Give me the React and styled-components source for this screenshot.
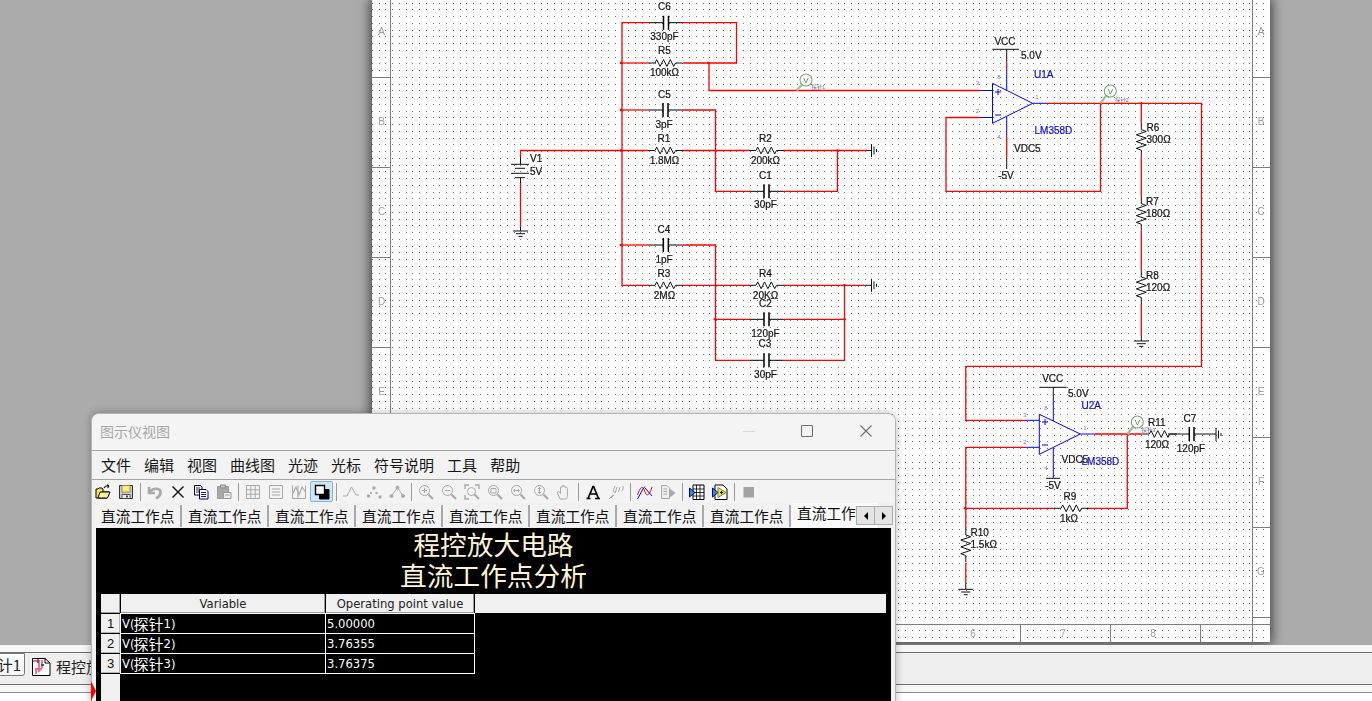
import React from 'react';
import styled, { createGlobalStyle } from 'styled-components';

const GlobalStyle = createGlobalStyle`
  html, body {
    margin: 0;
    padding: 0;
    background: #ababab;
    overflow: hidden;
  }
`;

const UI_FONT = '"Noto Sans CJK SC", "Liberation Sans", sans-serif';

const Page = styled.div`
  position: relative;
  width: 1372px;
  height: 701px;
  overflow: hidden;
  display: flex;
  flex-direction: column;
  font-family: ${UI_FONT};
`;

const Workspace = styled.div`
  height: 645px;
  flex: none;
  padding-left: 372px;
  background: #ababab;
  overflow: hidden;
`;

const Sheet = styled.div`
  width: 898px;
  height: 642px;
  background: #fff;
  box-shadow: 0 0 11px 2px rgba(0, 0, 0, 0.62);
`;

const SchematicSvg = styled.svg`
  display: block;
  width: 898px;
  height: 642px;
`;

const Label = styled.text`
  font-family: "Liberation Sans", "Noto Sans CJK SC", sans-serif;
  font-size: ${(p) => p.$size || 10}px;
  fill: ${(p) => p.$color || '#151515'};
  stroke: ${(p) => p.$color || '#151515'};
  stroke-width: ${(p) => p.$weight ?? 0.22}px;
  filter: blur(0.2px);
`;

const BottomArea = styled.div`
  flex: 1;
  display: flex;
  flex-direction: column;
  background: #fff;
`;

const TopStrip = styled.div`
  height: 7px;
  background: #f6f6f6;
  border-bottom: 1px solid #6f6f6f;
  box-sizing: content-box;
`;

const DesignTabs = styled.div`
  position: relative;
  height: 31px;
  background: #efefef;
  border-bottom: 1px solid #6f6f6f;
  display: flex;
  align-items: flex-start;
  overflow: hidden;
`;

const DesignTab = styled.div`
  display: flex;
  align-items: center;
  flex: none;
  height: ${(p) => (p.$active ? '23px' : '24px')};
  margin-top: ${(p) => (p.$active ? '0' : '2px')};
  background: ${(p) => (p.$active ? '#fbfbfb' : 'transparent')};
  border: ${(p) => (p.$active ? '1px solid #777' : 'none')};
  border-radius: 0 0 3px 0;
  width: ${(p) => (p.$active ? '26px' : 'auto')};
  margin-left: ${(p) => (p.$active ? '-1px' : '6px')};
  gap: 5px;
  font-size: 15px;
  color: #222;
  white-space: nowrap;
  justify-content: flex-end;
  padding-right: ${(p) => (p.$active ? '3px' : '0')};
  padding-bottom: ${(p) => (p.$active ? '0' : '2px')};
  box-sizing: border-box;
`;

const DocSvg = styled.svg`
  display: block;
  width: 20px;
  height: 20px;
  margin-top: 2px;
`;

const LightStrip = styled.div`
  height: 7px;
  background: #f7f7f7;
  border-bottom: 1px solid #8a8a8a;
`;

const WhiteStrip = styled.div`
  flex: 1;
  background: #fff;
`;

const RedMarker = styled.div`
  position: absolute;
  left: 91px;
  top: 681px;
  width: 0;
  height: 0;
  border-top: 10px solid transparent;
  border-bottom: 10px solid transparent;
  border-left: 5px solid #f00;
  z-index: 3;
`;

const Window = styled.div`
  position: absolute;
  left: 91px;
  top: 413px;
  width: 805px;
  height: 300px;
  box-sizing: border-box;
  border: 1px solid #b4b4b4;
  border-radius: 8px 8px 0 0;
  background: #f3f3f3;
  box-shadow: 0 0 9px rgba(0, 0, 0, 0.28);
  display: flex;
  flex-direction: column;
  overflow: hidden;
  z-index: 2;
`;

const TitleBar = styled.div`
  height: 36px;
  flex: none;
  box-sizing: border-box;
  display: flex;
  align-items: center;
  padding: 0 0 3px 8px;
  border-bottom: 1px solid #a3a3a3;
  box-sizing: content-box;
  height: 33px;
  background: #f4f4f4;
`;

const TitleText = styled.span`
  flex: 1;
  font-size: 14px;
  color: #a6a6a6;
`;

const WindowControl = styled.svg`
  display: block;
  width: 14px;
  height: 14px;
  flex: none;
  margin-right: ${(p) => p.$gap}px;
  fill: none;
  stroke: ${(p) => p.$color};
  stroke-width: 1.1;
`;

const MenuBar = styled.div`
  height: 26px;
  flex: none;
  display: flex;
  align-items: center;
  gap: 13px;
  padding: 0 0 2px 9px;
  border-bottom: 1px solid #a3a3a3;
  font-size: 15px;
  color: #161616;
`;

const Toolbar = styled.div`
  height: 23px;
  flex: none;
  display: flex;
  align-items: center;
  margin-left: -1px;
`;

const ToolButton = styled.div`
  width: 23px;
  height: 21px;
  flex: none;
  display: flex;
  align-items: center;
  justify-content: center;
  box-sizing: border-box;
  background: ${(p) => (p.$selected ? '#cfe6f8' : 'transparent')};
  border: 1px solid ${(p) => (p.$selected ? '#7fb4e0' : 'transparent')};
  border-radius: 2px;
`;

const ToolSep = styled.div`
  width: 1px;
  height: 18px;
  flex: none;
  margin: 0 2.5px;
  background: #9a9a9a;
`;

const IconSvg = styled.svg`
  display: block;
  width: 16px;
  height: 16px;
`;

const TabRow = styled.div`
  height: 25px;
  flex: none;
  position: relative;
  display: flex;
  align-items: flex-start;
  padding-left: 3px;
  overflow: hidden;
  background: #f0f0f0;
`;

const ResultTab = styled.div`
  width: 87px;
  height: ${(p) => (p.$active ? '25px' : '22px')};
  margin-top: ${(p) => (p.$active ? '0' : '2px')};
  flex: none;
  box-sizing: border-box;
  padding-left: 6px;
  font-size: 14.7px;
  line-height: ${(p) => (p.$active ? '20px' : '21px')};
  color: #111;
  white-space: nowrap;
  overflow: hidden;
  background: ${(p) => (p.$active ? '#fafafa' : '#f2f2f2')};
  border-right: ${(p) => (p.$active ? 'none' : '2px solid #a8a8a8')};
`;

const TabSpin = styled.div`
  position: absolute;
  left: 764px;
  top: 3px;
  width: 37px;
  height: 19px;
  display: flex;
  box-sizing: border-box;
  border: 1px solid #adadad;
  background: #e4e4e4;
`;

const SpinButton = styled.div`
  flex: 1;
  display: flex;
  align-items: center;
  justify-content: center;
  &:first-child {
    border-right: 1px solid #adadad;
  }
  &::before {
    content: '';
    border-top: 4px solid transparent;
    border-bottom: 4px solid transparent;
    ${(p) => (p.$dir === 'left' ? 'border-right: 4px solid #000;' : 'border-left: 4px solid #000;')}
  }
`;

const Content = styled.div`
  flex: 1;
  margin: 0 4px;
  background: #000;
  display: flex;
  flex-direction: column;
`;

const Heading = styled.div`
  height: 31px;
  flex: none;
  font-size: 26.7px;
  line-height: 31px;
  text-align: center;
  color: #fdf3d8;
`;

const GridTable = styled.div`
  flex: 1;
  margin: 4px 5px 0;
  display: grid;
  grid-template-columns: 19px 204px 148px 1fr;
  grid-template-rows: 19px 19px 19px 19px 1fr;
  gap: 1px;
  font-family: "DejaVu Sans", sans-serif;
  font-size: 11.6px;
`;

const HeaderCell = styled.div`
  background: #f0f0f0;
  color: #222;
  display: flex;
  align-items: center;
  justify-content: center;
  box-shadow: inset -1px -1px 0 #9b9b9b;
`;

const RowNumber = styled(HeaderCell)`
  box-shadow: inset -1px -1px 0 #b5b5b5;
  font-family: "Liberation Sans", sans-serif;
  font-size: 13px;
  color: #111;
`;

const Filler = styled.div`
  background: #f0f0f0;
`;

const ValueCell = styled.div`
  background: #000;
  color: #fff;
  outline: 1px solid #fff;
  display: flex;
  align-items: center;
  padding-left: 1px;
  white-space: nowrap;
  font-family: "DejaVu Sans", "Noto Sans CJK SC", sans-serif;
`;

const CjkRun = styled.span`
  font-family: "Noto Sans CJK SC", sans-serif;
  font-size: 15px;
  line-height: 17px;
  margin-left: -1px;
`;

const RED_WIRES = [
  // top feedback network
  'M650 22.7H622V285.3H648',
  'M682 22.7H736.5V63H683',
  'M648 63H622',
  'M709 63V90.5H980',
  'M649 110H622',
  'M682 110H715.5V191.3H750',
  'M783 191.3H837.5V150.5',
  // input line
  'M520.5 157V150.5H648',
  'M682 150.5H749',
  'M783 150.5H867',
  'M520.5 183V227',
  // lower network
  'M649 245H622',
  'M682.7 245H715.5V360.3H750',
  'M783 360.3H844.5V285.3',
  'M682 285.3H749',
  'M783 285.3H864.5',
  'M715.5 319.3H750',
  'M783 319.3H844.5',
  // U1A
  'M980 117.5H946V191.3H1100.5V103.3',
  'M1046 103.3H1201.5V366.3H965.8V420.3H1026',
  'M1006.7 62.7V68',
  'M1006.7 137V157',
  'M1141.3 103.3V122.7',
  'M1141.3 156.7V196.7',
  'M1141.3 230.7V270',
  'M1141.3 304V335',
  // U2A
  'M1093.3 434H1142.3',
  'M1026 447.3H965.8V528',
  'M965.8 508.3H1054.3',
  'M1086.7 508.3H1127.3V434',
  'M965.8 562.7V582.7',
];

const NODES = [
  [621, 63], [621, 110], [621, 150.5], [621, 245], [708.5, 63], [837.5, 150.5],
  [844.5, 285.3], [844.5, 319.3], [715, 319.3], [1141.3, 103.3], [965, 508.3],
];

const BLACK_WIRES = [
  'M992.3 49.3H1019M1006.7 49.3V62.7',
  'M1006.7 157V169',
  'M1039.3 387.3H1066.7M1053.3 387.3V400',
  'M1046 478.3H1060',
  'M1168 434H1189.3',
  'M1194 434H1216',
  'M1141.3 335V341',
  'M965.8 582.7V589',
  'M520.5 227V231',
  'M520.5 157V164.3',
  'M520.5 177.7V183',
  'M511 164.3H529M515 168.3H525M511 173.3H529M515 177.7H525',
  'M867 150.5H871',
  'M864.5 285.3H871.7',
];

const BLUE_WIRES = [
  'M992.5 83.3V123.3L1032.7 103.3Z',
  'M980 90.5H992.5M980 117.5H992.5',
  'M1032.7 103.3H1046',
  'M1006.7 68V90M1006.7 117V137',
  'M995 92H1001M998 89V95M995 115H1001',
  'M1039.3 414.3V454.3L1080.3 434Z',
  'M1026 420.3H1039.3M1026 447.3H1039.3',
  'M1080.3 434H1093.3',
  'M1053.3 400V421M1053.3 448V478',
  'M1042 422H1048M1045 419V425M1042 445H1048',
];

// name, x, y, anchor
const PART_LABELS = [
  ['C6', 664.5, 9.5], ['330pF', 664.5, 39.5], ['R5', 664.5, 54], ['100kΩ', 664.5, 76],
  ['C5', 664.5, 97.5], ['3pF', 664, 128], ['R1', 664, 142], ['1.8MΩ', 664.5, 164],
  ['R2', 765.5, 142], ['200kΩ', 765.5, 164], ['C1', 765.5, 179], ['30pF', 765.5, 208],
  ['C4', 664, 233], ['1pF', 664, 262.5], ['R3', 664, 277], ['2MΩ', 664.5, 299],
  ['R4', 765.5, 277], ['20KΩ', 765.5, 299], ['C2', 765.5, 307], ['120pF', 765.5, 337],
  ['C3', 765, 347], ['30pF', 765.5, 377.5],
  ['VCC', 1005, 44.5], ['-5V', 1006, 178.5],
  ['VCC', 1052.7, 381.5], ['-5V', 1053, 489], ['R9', 1070, 499.5], ['1kΩ', 1069, 521.5],
  ['120Ω', 1157, 447.5], ['C7', 1190, 421.5], ['120pF', 1191, 451.5],
];

const SIDE_LABELS = [
  ['V1', 530, 161.5], ['5V', 530, 175],
  ['5.0V', 1021, 58.5], ['VDC5', 1014, 151.5],
  ['R6', 1146.5, 130.5], ['300Ω', 1146.5, 142.5],
  ['R7', 1146, 204.5], ['180Ω', 1146, 216.5],
  ['R8', 1146, 278.5], ['120Ω', 1146, 290.5],
  ['5.0V', 1068, 396.5], ['VDC5', 1061.5, 462.5],
  ['R10', 970.5, 535.5], ['1.5kΩ', 970.5, 547.5], ['R11', 1148, 425.5],
];

const BLUE_LABELS = [
  ['U1A', 1034, 77.5], ['LM358D', 1034.5, 133.5], ['U2A', 1081.5, 408.5], ['LM358D', 1081.5, 464.5],
];

const PIN_LABELS = [
  ['3', 977.5, 85], ['2', 977.5, 112.5], ['1', 1037, 99], ['8', 999, 79], ['4', 999, 139],
  ['3', 1025, 416.5], ['2', 1025, 443.5], ['1', 1085, 429.5], ['8', 1046, 410], ['4', 1046, 470],
];

const H_RESISTORS = [[648, 63], [648, 150.5], [749, 150.5], [648, 285.3], [749, 285.3], [1054, 508.3]];
const V_RESISTORS = [[1141.3, 122.7], [1141.3, 196.7], [1141.3, 270], [965.8, 528]];
const CAPS = [[650, 22.7, 32], [649, 110, 33], [750, 191.3, 33], [649, 245, 33.7], [750, 319.3, 33], [750, 360.3, 33]];
const PROBES = [
  [806, 80, 796.7, 90.5, '探针1', 811.5, 88.5],
  [1110.3, 91, 1100.5, 103.3, '探针2', 1115, 101.5],
  [1137.3, 422, 1127.3, 434.3, '探针3', 1141.5, 431.5],
];

const LEFT_ZONES = [['A', 31], ['B', 121], ['C', 211], ['D', 301], ['E', 391]];
const RIGHT_ZONES = [['A', 31], ['B', 121], ['C', 211], ['D', 301], ['E', 391], ['F', 481], ['G', 571]];
const BOTTOM_ZONES = [['6', 973], ['7', 1063], ['8', 1153]];

function buildDots() {
  let d = '';
  for (let col = 0; col < 134; col += 1) {
    const x = Math.round(371.8 + col * 6.75);
    for (let row = 0; row < 95; row += 1) {
      const y = Math.round(2.7 + row * 6.75);
      d += `M${x} ${y}h1v1h-1z`;
    }
  }
  return d;
}

function hResistor(x, y) {
  const z = [0, 1, 2, 3, 4, 5].map((i) => `L${x + 7 + i * 3.4 + 1.7} ${y + (i % 2 ? 3.4 : -3.4)}`).join('');
  return `M${x} ${y}H${x + 7}${z}L${x + 27.5} ${y}H${x + 34.5}`;
}

function vResistor(x, y) {
  const z = [0, 1, 2, 3, 4, 5].map((i) => `L${x + (i % 2 ? -5 : 5)} ${y + 7 + i * 3.4 + 1.7}`).join('');
  return `M${x} ${y}V${y + 7}${z}L${x} ${y + 27.5}V${y + 34}`;
}

function ground(x, y) {
  return `M${x - 7.5} ${y}H${x + 7.5}M${x - 4.5} ${y + 2.7}H${x + 4.5}M${x - 2} ${y + 5.4}H${x + 2}`;
}

function sideGround(x, y) {
  return `M${x} ${y - 6.5}V${y + 6.5}M${x + 2.5} ${y - 4}V${y + 4}M${x + 5} ${y - 1.5}V${y + 1.5}`;
}

const Schematic = () => (
  <SchematicSvg viewBox="372 0 898 642">
    <path d={buildDots()} fill="#727272" shapeRendering="crispEdges" />
    {/* drawing frame */}
    <g stroke="#7d7d7d" strokeWidth="1" fill="none" shapeRendering="crispEdges">
      <path d="M390.5 0V624.5H1252.5V0" />
      <path d="M372 77.5H390M372 167.5H390M372 257.5H390M372 347.5H390" />
      <path d="M1253 77.5H1270M1253 167.5H1270M1253 257.5H1270M1253 347.5H1270M1253 437.5H1270M1253 527.5H1270M1253 617.5H1270" />
      <path d="M1020.5 625V642M1110.5 625V642M1200.5 625V642" />
      <path d="M1252.5 625V642M1253 624.5H1270" />
    </g>
    {LEFT_ZONES.map(([t, y]) => (
      <Label key={t} x={381.5} y={y + 3.5} textAnchor="middle" $color="#9c9c9c" $weight={0}>{t}</Label>
    ))}
    {RIGHT_ZONES.map(([t, y]) => (
      <Label key={t} x={1261} y={y + 3.5} textAnchor="middle" $color="#9c9c9c" $weight={0}>{t}</Label>
    ))}
    {BOTTOM_ZONES.map(([t, x]) => (
      <Label key={t} x={x} y={636.5} textAnchor="middle" $color="#9c9c9c" $weight={0}>{t}</Label>
    ))}

    {/* wires */}
    <g fill="none" stroke="#f00" strokeWidth="1.3">
      {RED_WIRES.map((d) => <path key={d} d={d} />)}
    </g>
    {NODES.map(([x, y]) => <circle key={`${x}-${y}`} cx={x} cy={y} r="1.3" fill="#f00" />)}
    <g fill="none" stroke="#111" strokeWidth="1">
      {BLACK_WIRES.map((d) => <path key={d} d={d} />)}
      {H_RESISTORS.map(([x, y]) => <path key={`h${x}-${y}`} d={hResistor(x, y)} />)}
      {V_RESISTORS.map(([x, y]) => <path key={`v${x}-${y}`} d={vResistor(x, y)} />)}
      <path d={hResistor(1142.3, 434)} />
      <path d={ground(520.5, 231)} />
      <path d={ground(1141.3, 341)} />
      <path d={ground(965.8, 589.3)} />
      <path d={sideGround(871.5, 150.5)} />
      <path d={sideGround(871.5, 285.3)} />
      <path d={sideGround(1216, 434.5)} />
    </g>
    {CAPS.map(([x, y, w]) => {
      const mid = x + w / 2;
      return (
        <g key={`${x}-${y}`} stroke="#000" fill="none">
          <path d={`M${x} ${y}H${mid - 2.5}M${mid + 2.5} ${y}H${x + w}`} strokeWidth="1" />
          <path d={`M${mid - 2.5} ${y - 7}V${y + 7}M${mid + 2.5} ${y - 7}V${y + 7}`} strokeWidth="1.5" />
        </g>
      );
    })}
    <path d="M1189.3 427V441M1194 427V441" stroke="#000" strokeWidth="1.5" fill="none" />
    <g fill="none" stroke="#00f" strokeWidth="1">
      {BLUE_WIRES.map((d) => <path key={d} d={d} />)}
    </g>

    {/* probes */}
    {PROBES.map(([cx, cy, hx, hy, text, tx, ty]) => (
      <g key={text}>
        <path d={`M${hx} ${hy}L${cx - 4} ${cy + 4.5}`} stroke="#9cc79c" strokeWidth="2.4" />
        <circle cx={cx} cy={cy} r="6" fill="#fff" stroke="#7fa97f" strokeWidth="1.1" />
        <Label x={cx} y={cy + 3} textAnchor="middle" $size={8} $color="#4d7a4d" $weight={0}>V</Label>
        <Label x={tx} y={ty} $size={5.4} $color="#66748f" $weight={0}>{text}</Label>
      </g>
    ))}

    {/* labels */}
    {PART_LABELS.map(([t, x, y]) => (
      <Label key={`${t}${x}${y}`} x={x} y={y} textAnchor="middle">{t}</Label>
    ))}
    {SIDE_LABELS.map(([t, x, y]) => (
      <Label key={`${t}${x}${y}`} x={x} y={y}>{t}</Label>
    ))}
    {BLUE_LABELS.map(([t, x, y]) => (
      <Label key={`${t}${x}${y}`} x={x} y={y} $color="#0a0ae6">{t}</Label>
    ))}
    {PIN_LABELS.map(([t, x, y]) => (
      <Label key={`${t}${x}${y}`} x={x} y={y} textAnchor="middle" $size={6} $color="#7474e6" $weight={0}>{t}</Label>
    ))}
  </SchematicSvg>
);

const GRAY = '#a9a9a9';

const Magnifier = ({ children }) => (
  <IconSvg viewBox="0 0 16 16" fill="none" stroke={GRAY}>
    <circle cx="6.5" cy="6.5" r="5" />
    <path d="M10.5 10.5L15 15" strokeWidth="2.2" />
    {children}
  </IconSvg>
);

const Icon = ({ name }) => {
  switch (name) {
    case 'open':
      return (
        <IconSvg viewBox="0 0 16 16">
          <path d="M1 14V5H3L4 4H7L8 5V8H14L12 14Z" fill="#ffe25a" stroke="#000" strokeWidth="1" />
          <path d="M3 14L5 8H15L12.5 14Z" fill="#fff3a0" stroke="#000" strokeWidth="1" />
          <path d="M9 4C10 2 12 1.5 14 2M14 2L12 0.8M14 2L12.6 3.8" fill="none" stroke="#000" strokeWidth="1.1" />
        </IconSvg>
      );
    case 'save':
      return (
        <IconSvg viewBox="0 0 16 16">
          <path d="M1.5 1.5H14.5V14.5H1.5Z" fill="#c9c9c9" stroke="#333" strokeWidth="1" />
          <path d="M4 1.5H12V8H4Z" fill="#fff06a" stroke="#777" strokeWidth="0.8" />
          <path d="M4 10.5H12V14.5H4Z" fill="#eee" stroke="#333" strokeWidth="0.8" />
          <path d="M9 11.5V13.5" stroke="#000" strokeWidth="1.4" />
        </IconSvg>
      );
    case 'undo':
      return (
        <IconSvg viewBox="0 0 16 16" fill="none" stroke={GRAY} strokeWidth="2.6">
          <path d="M2 3V9H8" />
          <path d="M3 8C6 3 14 4 13.5 9C13.3 11.5 11.5 13 9 14.5" />
        </IconSvg>
      );
    case 'delete':
      return (
        <IconSvg viewBox="0 0 16 16" fill="none" stroke="#111" strokeWidth="1.4">
          <path d="M2.5 2.5L13.5 13.5M13.5 2.5L2.5 13.5" />
        </IconSvg>
      );
    case 'copy':
      return (
        <IconSvg viewBox="0 0 16 16">
          <path d="M1.5 1.5H7.5L9 3V11H1.5Z" fill="#fff" stroke="#000" />
          <path d="M3 4H7M3 6H7M3 8H7" stroke="#000" strokeWidth="0.8" />
          <path d="M6.5 5.5H13L15 7.5V15H6.5Z" fill="#fff" stroke="#00007a" />
          <path d="M8 8.5H13M8 10.5H13M8 12.5H13" stroke="#00007a" strokeWidth="0.9" />
        </IconSvg>
      );
    case 'paste':
      return (
        <IconSvg viewBox="0 0 16 16">
          <path d="M1.5 2.5H12.5V14.5H1.5Z" fill="#a9a9a9" stroke="#9a9a9a" />
          <path d="M4.5 1H9.5V4H4.5Z" fill="#c4c4c4" stroke="#888" />
          <path d="M7.5 8.5H15V14.5H7.5Z" fill="#eee" stroke="#9a9a9a" />
          <path d="M9 11H13.5" stroke="#9a9a9a" />
        </IconSvg>
      );
    case 'grid':
      return (
        <IconSvg viewBox="0 0 16 16" fill="none" stroke={GRAY}>
          <path d="M1.5 1.5H14.5V14.5H1.5ZM1.5 5.8H14.5M1.5 10.2H14.5M5.8 1.5V14.5M10.2 1.5V14.5" />
        </IconSvg>
      );
    case 'list':
      return (
        <IconSvg viewBox="0 0 16 16" fill="none" stroke={GRAY}>
          <path d="M1.5 1.5H14.5V14.5H1.5ZM4 5H12M4 8H12M4 11H12" />
        </IconSvg>
      );
    case 'chart':
      return (
        <IconSvg viewBox="0 0 16 16" fill="none" stroke={GRAY}>
          <path d="M1.5 1.5V14.5M7 1.5V14.5M14.5 1.5V14.5M1.5 14.5H14.5" />
          <path d="M1.5 10L5 3L8 11L11 3L14.5 8" strokeWidth="1.2" />
        </IconSvg>
      );
    case 'overlay':
      return (
        <IconSvg viewBox="0 0 16 16">
          <path d="M5.5 5.5H15V15H5.5Z" fill="#000" stroke="#000" />
          <path d="M1.5 1.5H10.5V10.5H1.5Z" fill="#fff" stroke="#000" strokeWidth="1.4" />
        </IconSvg>
      );
    case 'peak':
      return (
        <IconSvg viewBox="0 0 16 16" fill="none" stroke={GRAY}>
          <path d="M0 12H4L8.5 3L13 11H16" />
        </IconSvg>
      );
    case 'dots':
      return (
        <IconSvg viewBox="0 0 16 16" fill={GRAY}>
          <circle cx="2.5" cy="12" r="1.7" />
          <circle cx="8" cy="4" r="1.7" />
          <circle cx="10.5" cy="9" r="1.2" />
          <circle cx="14" cy="13" r="1.7" />
          <circle cx="5" cy="9" r="1" />
        </IconSvg>
      );
    case 'peakDots':
      return (
        <IconSvg viewBox="0 0 16 16" fill={GRAY} stroke={GRAY}>
          <path d="M2.5 12L8.5 3.5L14 12" fill="none" />
          <circle cx="2.5" cy="12" r="1.5" />
          <circle cx="8.5" cy="3.5" r="1.5" />
          <circle cx="14" cy="12" r="1.5" />
        </IconSvg>
      );
    case 'zoomIn':
      return <Magnifier><path d="M4 6.5H9M6.5 4V9" /></Magnifier>;
    case 'zoomOut':
      return <Magnifier><path d="M4 6.5H9" /></Magnifier>;
    case 'zoomFit':
      return (
        <IconSvg viewBox="0 0 16 16" fill="none" stroke={GRAY}>
          <path d="M1 5V1H5M11 1H15V5M1 11V15H5" strokeWidth="1.4" />
          <circle cx="7.5" cy="7.5" r="4" />
          <path d="M10.5 10.5L15 15" strokeWidth="2" />
        </IconSvg>
      );
    case 'zoomArea':
      return <Magnifier><path d="M4 4.5H9V9H4Z" /></Magnifier>;
    case 'zoomX':
      return <Magnifier><path d="M3.5 6.5H9.5M5 5L3.5 6.5L5 8M8 5L9.5 6.5L8 8" /></Magnifier>;
    case 'zoomY':
      return <Magnifier><path d="M6.5 3.5V9.5M5 5L6.5 3.5L8 5M5 8L6.5 9.5L8 8" /></Magnifier>;
    case 'hand':
      return (
        <IconSvg viewBox="0 0 16 16" fill="#f2f2f2" stroke={GRAY}>
          <path d="M4 15L1.5 9C1 8 2.5 7 3.5 8L4.5 9.5V3.5C4.5 2.4 6 2.4 6 3.5V2.2C6 1 7.8 1 7.8 2.2V3C7.8 2 9.6 2 9.6 3.2V4C9.6 3 11.4 3 11.4 4.2V11C11.4 13 11 14 10.5 15Z" />
        </IconSvg>
      );
    case 'text':
      return (
        <IconSvg viewBox="0 0 16 16">
          <path d="M1.5 14.5H5.5M10 14.5H15M3 14.5L8 2.5H8.6L13.5 14.5M5 10H11.5" stroke="#000" strokeWidth="1.7" fill="none" />
        </IconSvg>
      );
    case 'probeText':
      return (
        <IconSvg viewBox="0 0 16 16" fill="none" stroke={GRAY}>
          <path d="M1 15L5 11M7 2L5 7L8 9M3 14L6 11" />
          <path d="M9 3L7.5 8M12 3L10.5 8M15 2C15.5 4 15 6 13.5 7.5" />
        </IconSvg>
      );
    case 'wave':
      return (
        <IconSvg viewBox="0 0 16 16" fill="none">
          <path d="M0.5 15L6 5M6 5L8 2.5" stroke="#0000e0" />
          <path d="M0.5 11C4 1 6 2 8 8C9.5 12 12 13 15 3" stroke="#e00000" />
          <path d="M8 4L15 12" stroke="#0000e0" />
        </IconSvg>
      );
    case 'export':
      return (
        <IconSvg viewBox="0 0 16 16" fill="#eee" stroke={GRAY}>
          <path d="M1.5 1.5H7L9.5 4V14.5H1.5Z" />
          <path d="M3.5 5H7M3.5 7.5H7M3.5 10H7" />
          <path d="M10.5 5.5L15 9L10.5 12.5Z" fill={GRAY} />
        </IconSvg>
      );
    case 'sheet':
      return (
        <IconSvg viewBox="0 0 16 16">
          <path d="M4 1H15V15.5H4Z" fill="#fff" stroke="#000" />
          <path d="M4 5H15M4 8.5H15M4 12H15M7.5 1V15.5M11 1V15.5" stroke="#000" strokeWidth="0.8" />
          <path d="M0.5 4L6 8.5L0.5 13Z" fill="#1e8fe0" stroke="#00007a" />
        </IconSvg>
      );
    case 'scope':
      return (
        <IconSvg viewBox="0 0 16 16">
          <path d="M3 1H11L15 5V15.5H3Z" fill="#fff" stroke="#000" />
          <path d="M0.5 4L6 8.5L0.5 13Z" fill="#1e8fe0" stroke="#00007a" />
          <path d="M6 3.5L14 8.5L6 13.5Z" fill="#ffe600" stroke="#776" />
          <path d="M8 8.5H11M9.5 7V10" stroke="#000" />
        </IconSvg>
      );
    case 'stop':
      return (
        <IconSvg viewBox="0 0 16 16">
          <path d="M2.5 3H13V13.5H2.5Z" fill="#a3a3a3" />
        </IconSvg>
      );
    default:
      return null;
  }
};

const TOOL_GROUPS = [
  ['open', 'save'],
  ['undo', 'delete', 'copy', 'paste'],
  ['grid', 'list', 'chart', 'overlay'],
  ['peak', 'dots', 'peakDots'],
  ['zoomIn', 'zoomOut', 'zoomFit', 'zoomArea', 'zoomX', 'zoomY', 'hand'],
  ['text', 'probeText'],
  ['wave', 'export'],
  ['sheet', 'scope'],
  ['stop'],
];

const MENUS = ['文件', '编辑', '视图', '曲线图', '光迹', '光标', '符号说明', '工具', '帮助'];
const RESULT_TABS = Array.from({ length: 9 }, (_, i) => i);
const RESULTS = [
  ['1', '5.00000'],
  ['2', '3.76355'],
  ['3', '3.76375'],
];

const DocIcon = () => (
  <DocSvg viewBox="0 0 20 20">
    <path d="M1.5 1.5H14L19 6V18.5H1.5Z" fill="#fff" stroke="#000" />
    <path d="M14 1.5V6H19" fill="none" stroke="#000" />
    <path d="M2 4H8V12H5V17M11 3V11L7 15" fill="none" stroke="#ef6a8a" strokeWidth="1.8" />
    <path d="M7 2V6M10 8H13" stroke="#333" strokeWidth="1.3" />
  </DocSvg>
);

export default function App() {
  return (
    <>
      <GlobalStyle />
      <Page>
        <Workspace>
          <Sheet>
            <Schematic />
          </Sheet>
        </Workspace>
        <BottomArea>
          <TopStrip />
          <DesignTabs>
            <DesignTab $active>计1</DesignTab>
            <DesignTab>
              <DocIcon />
              程控放大电路
            </DesignTab>
          </DesignTabs>
          <LightStrip />
          <WhiteStrip />
        </BottomArea>

        <Window>
          <TitleBar>
            <TitleText>图示仪视图</TitleText>
            <WindowControl viewBox="0 0 14 14" $color="#d8d8d8" $gap={44}>
              <path d="M1 7.5H13" />
            </WindowControl>
            <WindowControl viewBox="0 0 14 14" $color="#6e6e6e" $gap={45}>
              <rect x="1.5" y="1.5" width="11" height="11" rx="1" />
            </WindowControl>
            <WindowControl viewBox="0 0 14 14" $color="#6e6e6e" $gap={22}>
              <path d="M1.5 1.5L12.5 12.5M12.5 1.5L1.5 12.5" />
            </WindowControl>
          </TitleBar>
          <MenuBar>
            {MENUS.map((m) => <span key={m}>{m}</span>)}
          </MenuBar>
          <Toolbar>
            {TOOL_GROUPS.map((group, i) => (
              <React.Fragment key={group[0]}>
                {i > 0 && <ToolSep />}
                {group.map((name) => (
                  <ToolButton key={name} $selected={name === 'overlay'}>
                    <Icon name={name} />
                  </ToolButton>
                ))}
              </React.Fragment>
            ))}
          </Toolbar>
          <TabRow>
            {RESULT_TABS.map((i) => (
              <ResultTab key={i} $active={i === 8}>直流工作点</ResultTab>
            ))}
            <TabSpin>
              <SpinButton $dir="left" />
              <SpinButton $dir="right" />
            </TabSpin>
          </TabRow>
          <Content>
            <Heading>程控放大电路</Heading>
            <Heading>直流工作点分析</Heading>
            <GridTable>
              <HeaderCell />
              <HeaderCell>Variable</HeaderCell>
              <HeaderCell>Operating point value</HeaderCell>
              <Filler />
              {RESULTS.map(([probe, value]) => (
                <React.Fragment key={probe}>
                  <RowNumber>{probe}</RowNumber>
                  <ValueCell>V(<CjkRun>探针</CjkRun>{probe})</ValueCell>
                  <ValueCell>{value}</ValueCell>
                  <div />
                </React.Fragment>
              ))}
              <Filler />
            </GridTable>
          </Content>
        </Window>
        <RedMarker />
      </Page>
    </>
  );
}
